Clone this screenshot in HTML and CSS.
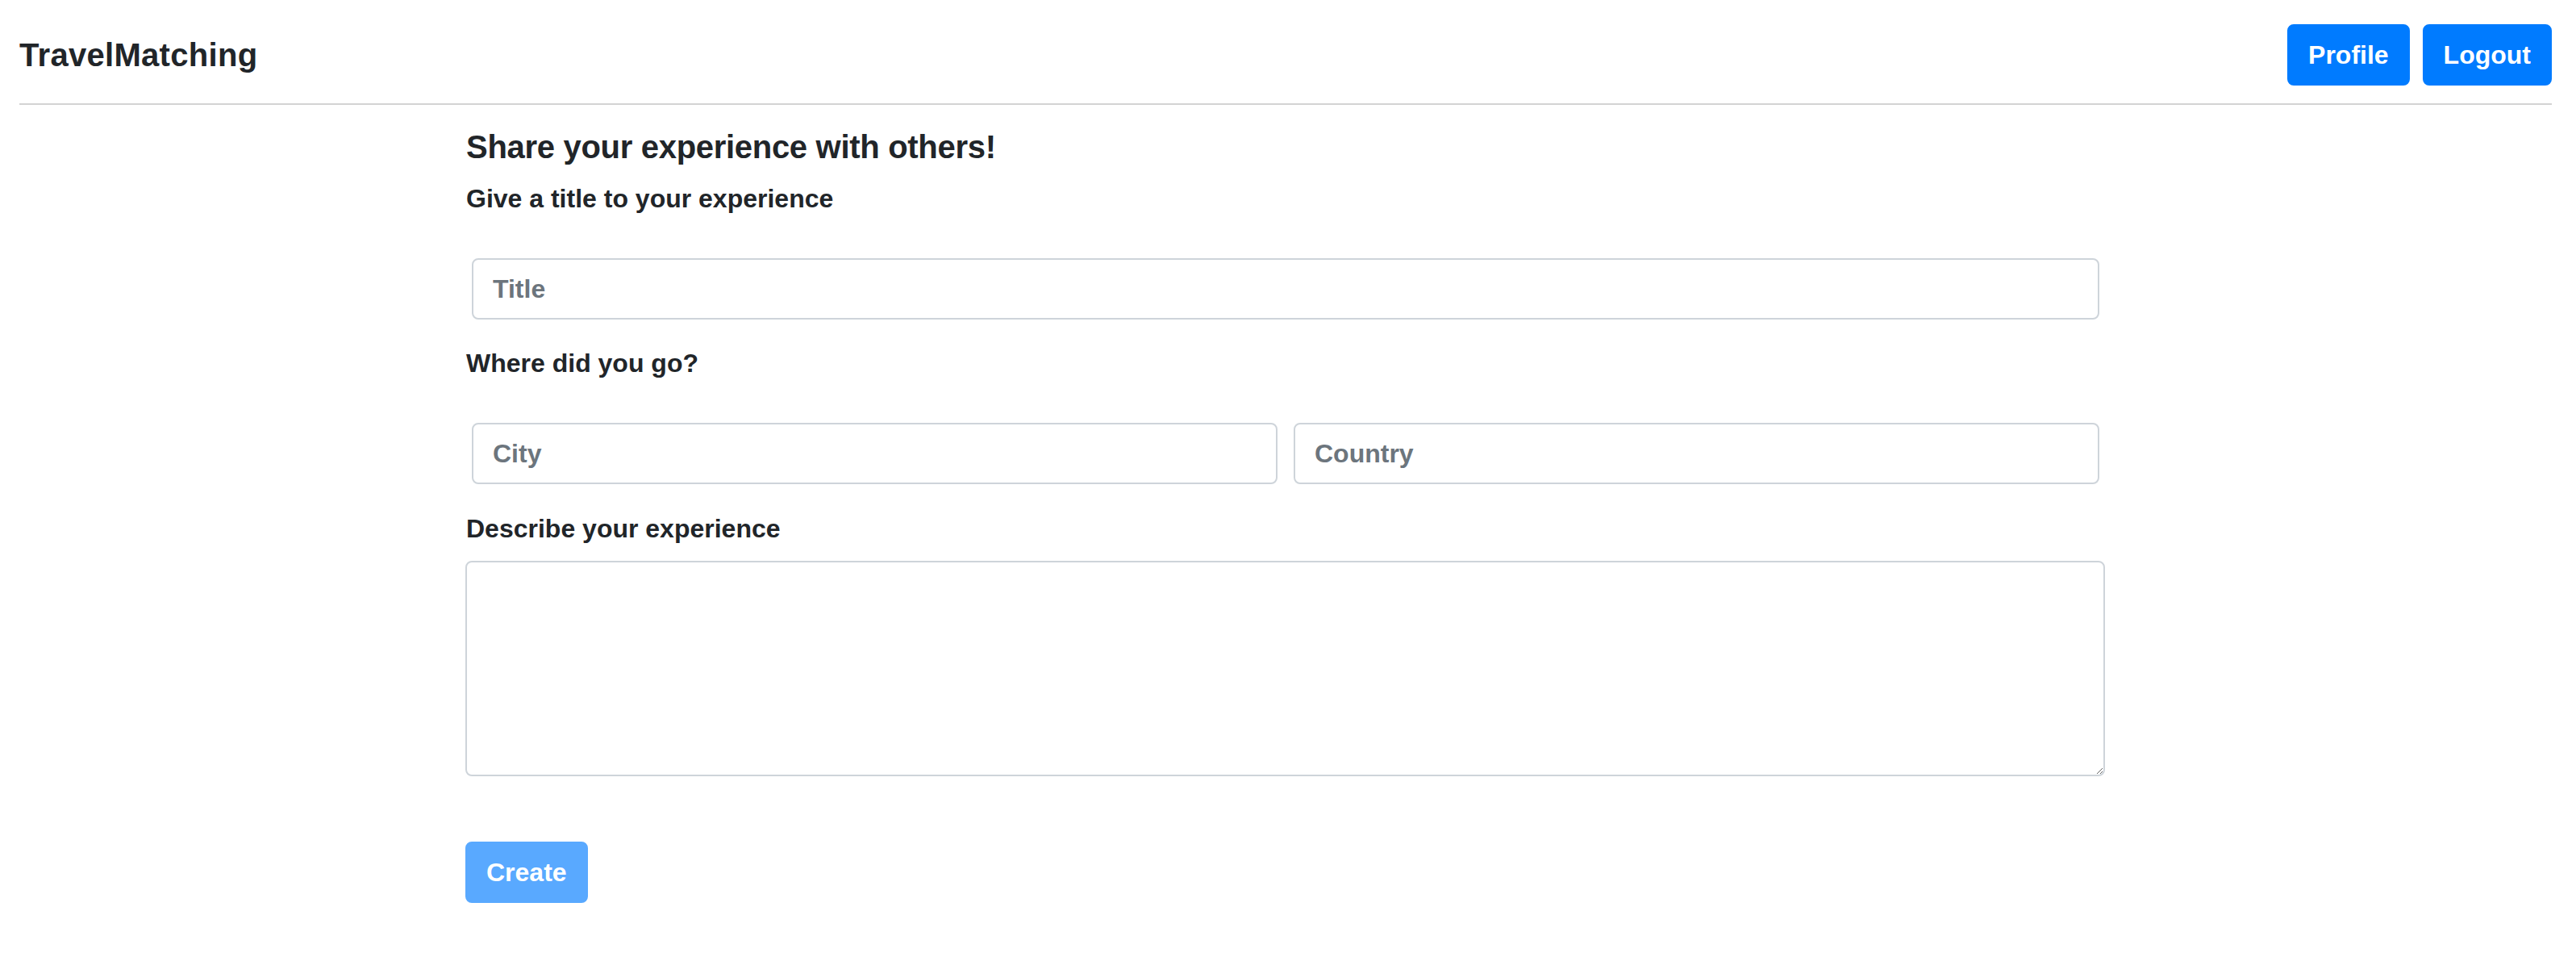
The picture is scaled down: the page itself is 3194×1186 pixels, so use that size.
FILE: index.html
```html
<!DOCTYPE html>
<html lang="en">
<head>
<meta charset="utf-8">
<title>TravelMatching</title>
<link rel="stylesheet" href="styles.css">
</head>
<body>
<header class="navbar">
  <div class="brand">TravelMatching</div>
  <nav class="nav-actions">
    <button class="btn btn-primary" type="button">Profile</button>
    <button class="btn btn-primary" type="button">Logout</button>
  </nav>
</header>
<main class="container">
  <h5 class="page-title">Share your experience with others!</h5>
  <form class="exp-form">
    <label class="field-label label-title" for="title">Give a title to your experience</label>
    <div class="row-single">
      <input id="title" class="form-control" type="text" placeholder="Title">
    </div>
    <label class="field-label label-where">Where did you go?</label>
    <div class="row-double">
      <input class="form-control" type="text" placeholder="City">
      <input class="form-control" type="text" placeholder="Country">
    </div>
    <label class="field-label label-desc" for="desc">Describe your experience</label>
    <textarea id="desc" class="form-textarea"></textarea>
    <button class="btn btn-create" type="button" disabled>Create</button>
  </form>
</main>
</body>
</html>
```

FILE: styles.css
```css
* {
  box-sizing: border-box;
}

body {
  margin: 0;
  background: #ffffff;
  color: #212529;
  font-family: "Liberation Sans", Arial, sans-serif;
  font-weight: 700;
}

.navbar {
  display: flex;
  justify-content: space-between;
  align-items: center;
  margin: 0 30px 0 24px;
  padding: 30px 0 22px 0;
  border-bottom: 2px solid #d3d3d3;
}

.brand {
  font-size: 40px;
  line-height: 60px;
  font-weight: 700;
  letter-spacing: 0.3px;
  color: #212529;
}

.nav-actions {
  display: flex;
  gap: 16px;
}

.btn {
  font-family: "Liberation Sans", Arial, sans-serif;
  font-weight: 700;
  font-size: 32px;
  line-height: 48px;
  padding: 12px 24px;
  border: 2px solid transparent;
  border-radius: 8px;
  color: #ffffff;
  cursor: pointer;
}

.btn-primary {
  background: #007bff;
  border-color: #007bff;
}

.container {
  margin-left: 577px;
  width: 2033px;
  padding-top: 28px;
}

.page-title {
  margin: 0 0 16px 1px;
  font-size: 40px;
  line-height: 48px;
  font-weight: 700;
  letter-spacing: -0.3px;
}

.exp-form {
  display: flex;
  flex-direction: column;
  align-items: stretch;
}

.field-label {
  display: block;
  margin-left: 1px;
  font-size: 32px;
  line-height: 48px;
  font-weight: 700;
}

.label-title {
  margin-bottom: 50px;
}

.label-where {
  margin-top: 30px;
  margin-bottom: 50px;
}

.label-desc {
  margin-top: 31px;
  margin-bottom: 16px;
}

.row-single,
.row-double {
  padding: 0 7px 0 8px;
}

.row-single {
  display: flex;
}

.row-single .form-control {
  flex: 1;
}

.row-double {
  display: grid;
  grid-template-columns: 1fr 1fr;
  gap: 20px;
}

.form-control {
  display: block;
  width: 100%;
  height: 76px;
  padding: 12px 24px;
  font-family: "Liberation Sans", Arial, sans-serif;
  font-size: 32px;
  line-height: 48px;
  font-weight: 700;
  color: #495057;
  background: #ffffff;
  border: 2px solid #ced4da;
  border-radius: 8px;
  outline: none;
}

.form-control::placeholder {
  color: #6c757d;
  opacity: 1;
  font-weight: 700;
}

.form-textarea {
  display: block;
  width: 100%;
  height: 267px;
  padding: 12px 24px;
  font-family: "Liberation Sans", Arial, sans-serif;
  font-size: 32px;
  line-height: 48px;
  border: 2px solid #ced4da;
  border-radius: 8px;
  outline: none;
  resize: vertical;
}

.btn-create {
  align-self: flex-start;
  margin-top: 81px;
  background: #59a9ff;
  border-color: #59a9ff;
  cursor: default;
}
```
